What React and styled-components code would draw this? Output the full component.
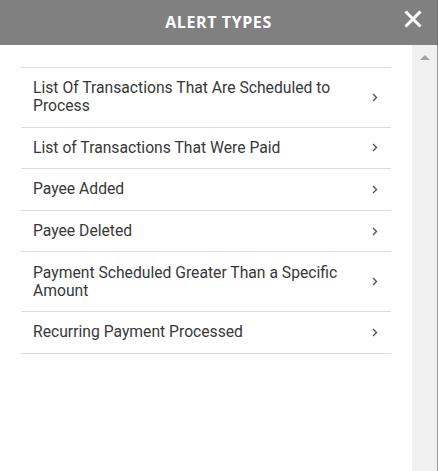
import React from 'react';
import styled, { createGlobalStyle } from 'styled-components';

const GlobalStyle = createGlobalStyle`
  html, body {
    margin: 0;
    padding: 0;
    background: #ffffff;
  }
  #root {
    height: 471px;
  }
`;

const Panel = styled.div`
  width: 438px;
  height: 471px;
  display: flex;
  flex-direction: column;
  overflow: hidden;
`;

const Header = styled.header`
  position: relative;
  height: 45px;
  flex: none;
  background: #808080;
  display: flex;
  align-items: center;
  justify-content: center;
  border-right: 1px solid #6e6e6e;
  box-sizing: border-box;

  h2 {
    margin: 0 0 2px 0;
    color: #ffffff;
    font-family: 'Open Sans', 'Liberation Sans', sans-serif;
    font-weight: 700;
    font-size: 16px;
    letter-spacing: 0.6px;
  }
`;

const CloseButton = styled.button`
  position: absolute;
  right: 14px;
  top: 9px;
  width: 20px;
  height: 20px;
  padding: 0;
  border: 0;
  background: none;
  cursor: pointer;
  display: flex;
  align-items: center;
  justify-content: center;
`;

const Body = styled.div`
  flex: 1;
  display: flex;
  min-height: 0;
`;

const Content = styled.div`
  flex: 1;
  padding: 22px 21px 0 21px;
`;

const List = styled.ul`
  list-style: none;
  margin: 0;
  padding: 0;
  border-top: 1px solid #dcdcdc;
`;

const Row = styled.li`
  display: flex;
  align-items: center;
  padding: 11.3px 12px;
  border-bottom: 1px solid #dcdcdc;
  cursor: pointer;
  font-family: Roboto, 'Liberation Sans', sans-serif;
  font-size: 15.7px;
  line-height: 18px;
  color: #383838;

  span {
    flex: 1;
    padding-right: 30px;
  }
  svg {
    flex: none;
    margin-right: 1px;
  }
`;

const Scrollbar = styled.div`
  width: 25px;
  flex: none;
  background: #f0f0f0;
  border-right: 1px solid #9a9a9a;
  display: flex;
  justify-content: center;
  padding-top: 10px;
  box-sizing: content-box;
`;

const UpArrow = styled.div`
  width: 0;
  height: 0;
  border-left: 5px solid transparent;
  border-right: 5px solid transparent;
  border-bottom: 5px solid #a3a3a3;
`;

const alertTypes = [
  'List Of Transactions That Are Scheduled to Process',
  'List of Transactions That Were Paid',
  'Payee Added',
  'Payee Deleted',
  'Payment Scheduled Greater Than a Specific Amount',
  'Recurring Payment Processed',
];

const Chevron = () => (
  <svg width="6" height="9" viewBox="0 0 6 9">
    <path d="M1 1 L4.5 4.5 L1 8" fill="none" stroke="#555" strokeWidth="1.4" />
  </svg>
);

const App = () => (
  <>
    <GlobalStyle />
    <Panel>
      <Header>
        <h2>ALERT TYPES</h2>
        <CloseButton title="Close">
          <svg width="18" height="18" viewBox="0 0 18 18">
            <path d="M1.5 1.5 L16.5 16.5 M16.5 1.5 L1.5 16.5" stroke="#fff" strokeWidth="3" />
          </svg>
        </CloseButton>
      </Header>
      <Body>
        <Content>
          <List>
            {alertTypes.map(type => (
              <Row key={type}>
                <span>{type}</span>
                <Chevron />
              </Row>
            ))}
          </List>
        </Content>
        <Scrollbar>
          <UpArrow />
        </Scrollbar>
      </Body>
    </Panel>
  </>
);

export default App;
